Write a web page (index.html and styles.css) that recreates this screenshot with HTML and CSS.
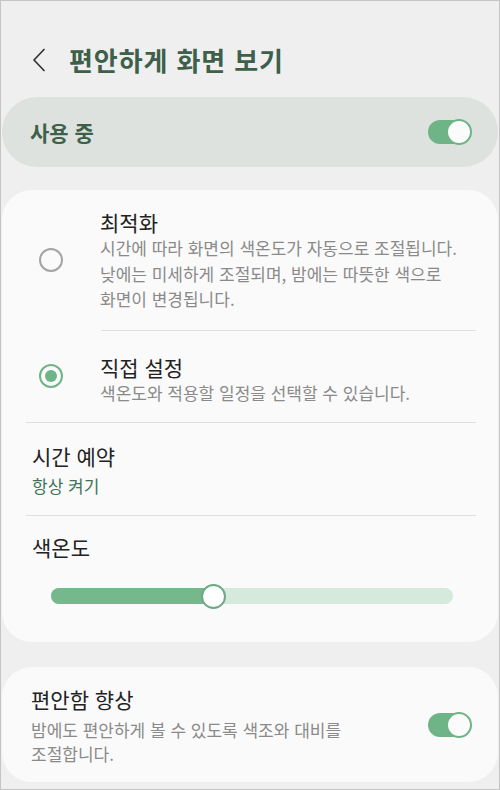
FILE: index.html
```html
<!DOCTYPE html>
<html lang="ko">
<head>
<meta charset="utf-8">
<link rel="stylesheet" href="styles.css">
</head>
<body>
<div class="frame">
  <header class="header">
    <svg class="back" width="14" height="24" viewBox="0 0 14 24"><polyline points="12,1.5 2,12 12,22.5" fill="none" stroke="#333" stroke-width="1.7" stroke-linecap="round" stroke-linejoin="round"/></svg>
    <h1 class="title">편안하게 화면 보기</h1>
  </header>

  <div class="master">
    <span class="master-label">사용 중</span>
    <span class="toggle"><span class="knob"></span></span>
  </div>

  <section class="card card-main">
    <div class="option option-first">
      <span class="radio"></span>
      <div class="option-text">
        <div class="item-title">최적화</div>
        <div class="item-desc">시간에 따라 화면의 색온도가 자동으로 조절됩니다.<br>낮에는 미세하게 조절되며, 밤에는 따뜻한 색으로<br>화면이 변경됩니다.</div>
      </div>
    </div>
    <div class="divider divider-indent"></div>
    <div class="option option-second">
      <span class="radio radio-on"><span class="dot"></span></span>
      <div class="option-text">
        <div class="item-title">직접 설정</div>
        <div class="item-desc">색온도와 적용할 일정을 선택할 수 있습니다.</div>
      </div>
    </div>
    <div class="divider"></div>
    <div class="plain plain-schedule">
      <div class="item-title">시간 예약</div>
      <div class="item-sub">항상 켜기</div>
    </div>
    <div class="divider"></div>
    <div class="plain plain-temp">
      <div class="item-title">색온도</div>
      <div class="slider">
        <div class="track">
          <div class="fill" style="width:40.5%"></div>
          <span class="thumb" style="left:40.5%"></span>
        </div>
      </div>
    </div>
  </section>

  <section class="card card-comfort">
    <div class="comfort-text">
      <div class="item-title">편안함 향상</div>
      <div class="item-desc comfort-desc">밤에도 편안하게 볼 수 있도록 색조와 대비를<br>조절합니다.</div>
    </div>
    <span class="toggle"><span class="knob"></span></span>
  </section>
</div>
</body>
</html>
```

FILE: styles.css
```css
* { box-sizing: border-box; }
html, body { margin: 0; padding: 0; }
body {
  font-family: "Noto Sans CJK KR", "Noto Sans", sans-serif;
  background: #efefef;
}
.frame {
  width: 500px;
  height: 790px;
  border: 1px solid #c4c4c4;
  background: #efefef;
  padding: 0 1px;
  overflow: hidden;
}
.header {
  height: 96px;
  display: flex;
  align-items: center;
  padding: 20px 0 0 30px;
}
.back { display: block; margin-top: 1px; }
.title {
  margin: 0 0 0 23px;
  font-size: 26px;
  font-weight: 700;
  color: #3e5f4a;
  letter-spacing: 0.9px;
}
.master {
  height: 70px;
  background: #dde2de;
  border-radius: 35px;
  display: flex;
  align-items: center;
  justify-content: space-between;
  padding: 0 27px 0 28px;
}
.master-label {
  font-size: 21px;
  font-weight: 700;
  color: #3e5f4a;
}
.toggle {
  width: 43px;
  height: 24px;
  border-radius: 12px;
  background: #6fb487;
  display: flex;
  align-items: center;
  justify-content: flex-end;
  padding-right: 1px;
  flex-shrink: 0;
}
.knob {
  width: 22px;
  height: 22px;
  border-radius: 50%;
  background: #fbfbfb;
  border: 2px solid #6fb487;
  box-sizing: content-box;
  margin-right: -2px;
}
.card {
  background: #fafafa;
  border-radius: 30px;
}
.card-main {
  margin-top: 23px;
  padding: 0 22px 33px 24px;
}
.option {
  display: flex;
  align-items: center;
}
.option-first { padding: 19px 0 18px; }
.option-second { padding: 23px 0 17px; }
.radio {
  width: 24px;
  height: 24px;
  border-radius: 50%;
  border: 2px solid #a3a3a3;
  margin: 0 37px 0 13px;
  flex-shrink: 0;
  display: flex;
  align-items: center;
  justify-content: center;
}
.radio-on {
  border-color: #6fb487;
  margin-bottom: 7px;
}
.dot {
  width: 12px;
  height: 12px;
  border-radius: 50%;
  background: #6fb487;
}
.item-title {
  font-size: 21px;
  line-height: 26px;
  color: #222;
}
.item-desc {
  font-size: 17px;
  line-height: 25.5px;
  color: #8a8a8a;
  white-space: nowrap;
}
.item-sub {
  margin-top: 5px;
  font-size: 17px;
  line-height: 24px;
  color: #3f7357;
}
.divider {
  height: 1px;
  background: #e0e0e0;
}
.divider-indent { margin-left: 75px; }
.plain { padding-left: 6px; }
.plain-schedule { padding-top: 20px; padding-bottom: 17px; }
.plain-temp { padding-top: 18px; }
.slider {
  margin: 23px 23px 0 19px;
  height: 26px;
  display: flex;
  align-items: center;
}
.track {
  position: relative;
  width: 100%;
  height: 16px;
  border-radius: 8px;
  background: #d5e9dc;
}
.fill {
  height: 100%;
  border-radius: 8px 0 0 8px;
  background: #74b88b;
}
.thumb {
  position: absolute;
  top: 50%;
  width: 25px;
  height: 25px;
  margin: -12.5px 0 0 -12.5px;
  border-radius: 50%;
  background: #fff;
  border: 2px solid #6ba983;
}
.card-comfort {
  margin-top: 25px;
  height: 115px;
  display: flex;
  align-items: center;
  justify-content: space-between;
  padding: 0 27px 0 29px;
}
.comfort-text { padding-top: 2px; }
.comfort-desc {
  margin-top: 6px;
  line-height: 24px;
}
```
